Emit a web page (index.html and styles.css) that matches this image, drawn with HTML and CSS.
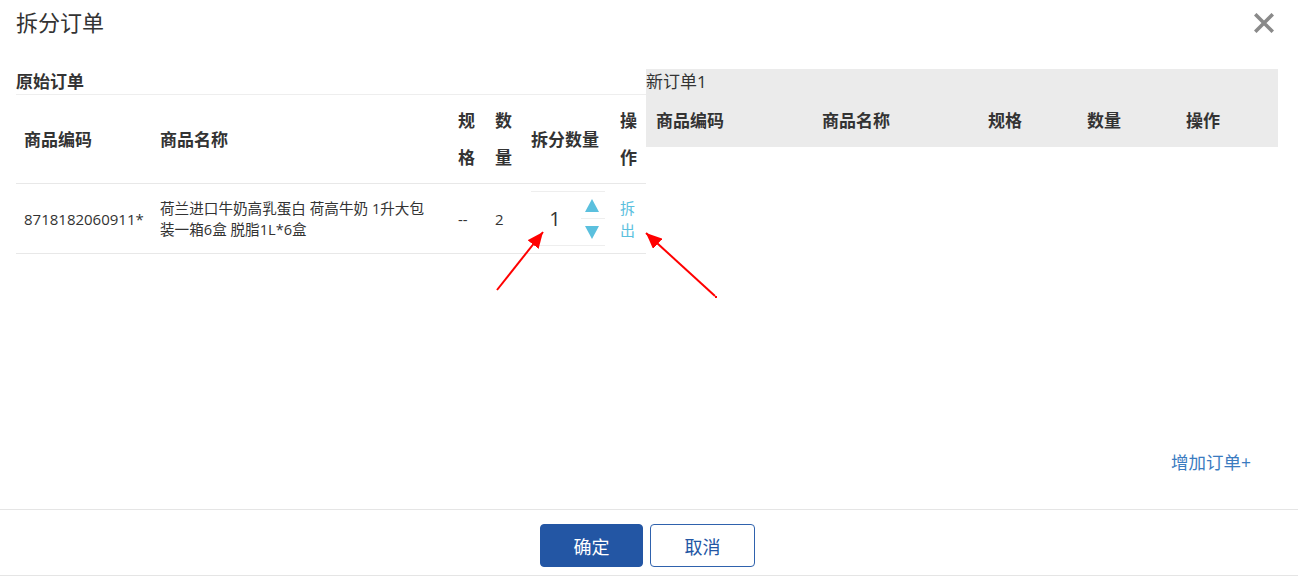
FILE: index.html
```html
<!DOCTYPE html>
<html lang="zh-CN">
<head>
<meta charset="utf-8">
<title>拆分订单</title>
<link rel="stylesheet" href="styles.css">
</head>
<body>
<div class="modal">
  <div class="modal-header">
    <h4 class="modal-title">拆分订单</h4>
    <button class="close" aria-label="关闭">
      <svg width="20" height="20" viewBox="0 0 20 20"><path d="M2.5 2.5 L17.5 17.5 M17.5 2.5 L2.5 17.5" stroke="#8a8a8a" stroke-width="3.6" stroke-linecap="square"/></svg>
    </button>
  </div>
  <div class="modal-body">
    <div class="panel panel-left">
      <div class="caption caption-bold">原始订单</div>
      <table class="tbl tbl-orig">
        <colgroup>
          <col style="width:136px"><col style="width:298px"><col style="width:37px"><col style="width:36px"><col style="width:89px"><col style="width:34px">
        </colgroup>
        <thead>
          <tr><th>商品编码</th><th>商品名称</th><th>规格</th><th>数量</th><th>拆分数量</th><th>操作</th></tr>
        </thead>
        <tbody>
          <tr>
            <td>8718182060911*</td>
            <td class="name">荷兰进口牛奶高乳蛋白 荷高牛奶 1升大包装一箱6盒 脱脂1L*6盒</td>
            <td>--</td>
            <td>2</td>
            <td class="qty-cell">
              <div class="spinner">
                <span class="spin-val">1</span>
                <span class="spin-btns">
                  <span class="spin-up"></span>
                  <span class="spin-down"></span>
                </span>
              </div>
            </td>
            <td class="op"><a class="link-split">拆出</a></td>
          </tr>
        </tbody>
      </table>
    </div>
    <div class="panel panel-right">
      <div class="new-order">
        <div class="caption">新订单1</div>
        <table class="tbl tbl-new">
          <colgroup>
            <col style="width:166px"><col style="width:166px"><col style="width:99px"><col style="width:99px"><col>
          </colgroup>
          <thead>
            <tr><th>商品编码</th><th>商品名称</th><th>规格</th><th>数量</th><th>操作</th></tr>
          </thead>
        </table>
      </div>
      <div class="add-row"><a class="link-add">增加订单+</a></div>
    </div>
  </div>
  <div class="modal-footer">
    <button class="btn btn-primary">确定</button>
    <button class="btn btn-default">取消</button>
  </div>
  <svg class="arrows" width="1298" height="576" viewBox="0 0 1298 576">
    <defs>
      <marker id="ah" markerWidth="8" markerHeight="7" refX="8" refY="3.5" orient="auto" markerUnits="strokeWidth">
        <path d="M0 0 L8 3.5 L0 7 Z" fill="#f00"/>
      </marker>
    </defs>
    <line x1="497" y1="290" x2="543" y2="232" stroke="#f00" stroke-width="2" marker-end="url(#ah)"/>
    <line x1="715" y1="296" x2="646" y2="233" stroke="#f00" stroke-width="2" marker-end="url(#ah)"/>
    <rect x="715" y="296" width="2" height="2" fill="#f00"/>
  </svg>
</div>
</body>
</html>
```
FILE: styles.css
```css
* { box-sizing: border-box; }
html, body { margin: 0; padding: 0; background: #fff; }
body {
  font-family: "Open Sans", "Noto Sans CJK SC", sans-serif;
  color: #333;
  width: 1298px;
  height: 576px;
  overflow: hidden;
}
.modal { position: relative; width: 1298px; height: 576px; }
.modal-header {
  height: 46px;
  display: flex;
  justify-content: space-between;
  align-items: flex-start;
  padding: 8px 24px 0 16px;
}
.modal-title {
  margin: 0;
  font-size: 22px;
  line-height: 28px;
  font-weight: normal;
  color: #333;
}
.close {
  border: 0;
  background: none;
  padding: 0;
  margin-top: 5px;
  width: 20px;
  height: 20px;
  cursor: pointer;
}
.close svg { display: block; }
.modal-body {
  height: 463px;
  display: flex;
  padding: 23px 20px 0 16px;
}
.panel-left { width: 630px; }
.panel-right {
  width: 632px;
  display: flex;
  flex-direction: column;
}
.caption {
  font-size: 17px;
  line-height: 25px;
  height: 25px;
}
.caption-bold { font-weight: bold; }
.tbl {
  border-collapse: collapse;
  table-layout: fixed;
  width: 100%;
}
.tbl th {
  font-size: 17px;
  font-weight: bold;
  line-height: 37px;
  padding: 7px 8px;
  text-align: left;
  vertical-align: middle;
}
.tbl-orig { border-top: 1px solid #eee; }
.tbl-orig thead tr { border-bottom: 1px solid #e8e8e8; }
.tbl-orig td {
  font-size: 15px;
  padding: 0 8px;
  vertical-align: middle;
  height: 70px;
  border-bottom: 1px solid #e8e8e8;
}
.tbl-orig td.name { font-size: 14.6px; line-height: 21px; padding: 13px 14px 13px 8px; }
.tbl-orig td.qty-cell { padding: 0 0 0 8px; }
.spinner {
  display: flex;
  width: 74px;
  height: 55px;
  border-top: 1px solid #eee;
  border-bottom: 1px solid #eee;
}
.spin-val {
  width: 48px;
  font-size: 20px;
  line-height: 53px;
  text-align: center;
  color: #333;
}
.spin-btns {
  flex: 1;
  display: flex;
  flex-direction: column;
  padding-left: 2px;
}
.spin-up, .spin-down {
  flex: 1;
  display: flex;
  align-items: center;
  justify-content: center;
  padding-right: 2px;
}
.spin-up { border-bottom: 1px solid #eee; }
.spin-up::before {
  content: "";
  border-left: 7px solid transparent;
  border-right: 7px solid transparent;
  border-bottom: 13px solid #5bc0de;
}
.spin-down::before {
  content: "";
  border-left: 7px solid transparent;
  border-right: 7px solid transparent;
  border-top: 13px solid #5bc0de;
}
.op { padding: 0 4px 0 8px !important; }
.link-split {
  color: #5bc0de;
  font-size: 15px;
  line-height: 22px;
  display: block;
  cursor: pointer;
}
.new-order { background: #ebebeb; }
.tbl-new th { padding: 8px 10px; }
.add-row {
  margin-top: auto;
  padding: 0 27px 35px 0;
  text-align: right;
}
.link-add {
  color: #3a7bbf;
  font-size: 17.5px;
  line-height: 24px;
  cursor: pointer;
}
.modal-footer {
  border-top: 1px solid #e5e5e5;
  border-bottom: 1px solid #e5e5e5;
  height: 67px;
  display: flex;
  justify-content: center;
  align-items: flex-start;
  gap: 7px;
  padding-top: 14px;
  padding-right: 3px;
}
.btn {
  height: 43px;
  border-radius: 4px;
  font-family: "Open Sans", "Noto Sans CJK SC", sans-serif;
  font-size: 18px;
  cursor: pointer;
}
.btn-primary {
  width: 103px;
  background: #2356a4;
  border: 1px solid #2356a4;
  color: #fff;
}
.btn-default {
  width: 105px;
  background: #fff;
  border: 1px solid #2f62ad;
  color: #2356a4;
}
.arrows {
  position: absolute;
  left: 0;
  top: 0;
  pointer-events: none;
}
```
